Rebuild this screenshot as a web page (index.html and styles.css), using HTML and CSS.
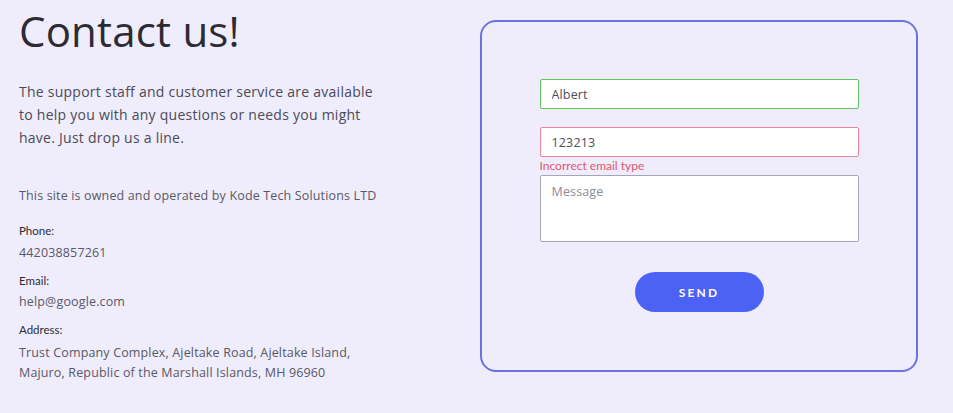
FILE: index.html
```html
<!DOCTYPE html>
<html>
<head>
<meta charset="utf-8">
<link rel="stylesheet" href="styles.css">
</head>
<body>
<div class="page">
  <section class="info">
    <h1 class="title">Contact us!</h1>
    <p class="lead">The support staff and customer service are available to help you with any questions or needs you might have. Just drop us a line.</p>
    <p class="owner">This site is owned and operated by Kode Tech Solutions LTD</p>
    <div class="item">
      <div class="label">Phone:</div>
      <div class="value">442038857261</div>
    </div>
    <div class="item">
      <div class="label">Email:</div>
      <div class="value">help@google.com</div>
    </div>
    <div class="item">
      <div class="label">Address:</div>
      <div class="value address">Trust Company Complex, Ajeltake Road, Ajeltake Island, Majuro, Republic of the Marshall Islands, MH 96960</div>
    </div>
  </section>
  <form class="card">
    <input class="field ok" type="text" value="Albert">
    <input class="field bad" type="text" value="123213">
    <div class="error">Incorrect email type</div>
    <textarea class="field message" placeholder="Message"></textarea>
    <button class="send" type="button">SEND</button>
  </form>
</div>
</body>
</html>
```
FILE: styles.css
```css
* { box-sizing: border-box; }
html, body { margin: 0; padding: 0; }
body {
  background: #efedfc;
  font-family: "Open Sans", "Noto Sans", sans-serif;
  color: #2c2b33;
  width: 953px;
  height: 413px;
  overflow: hidden;
}
.page {
  display: flex;
  align-items: flex-start;
  padding: 0 0 0 19px;
}
.info {
  width: 400px;
}
.title {
  margin: 5px 0 0 0;
  font-weight: 400;
  font-size: 42px;
  line-height: 52px;
  letter-spacing: 0.2px;
  color: #2c2b33;
}
.lead {
  margin: 23px 0 0 0;
  width: 362px;
  font-size: 14px;
  line-height: 23px;
  letter-spacing: 0.25px;
  color: #4b4a57;
}
.owner {
  margin: 37px 0 0 0;
  font-size: 12.5px;
  line-height: 20px;
  letter-spacing: 0.15px;
  color: #595866;
}
.item { margin-top: 17px; }
.item + .item { margin-top: 10px; }
.label {
  font-family: "Lato", sans-serif;
  font-size: 11.5px;
  line-height: 16px;
  color: #2c2b33;
}
.value {
  margin-top: 3.5px;
  font-size: 12.5px;
  line-height: 20px;
  letter-spacing: 0.15px;
  color: #595866;
}
.address { width: 345px; margin-top: 5px; }
.card {
  margin: 20px 0 0 61px;
  width: 438px;
  height: 352px;
  border: 2px solid #6b73df;
  border-radius: 16px;
  display: flex;
  flex-direction: column;
  align-items: center;
  padding-top: 57px;
}
.field {
  display: block;
  width: 319px;
  height: 30px;
  border: 1px solid #a7a5b8;
  border-radius: 2px;
  background: #ffffff;
  padding: 0 11px;
  font-family: "Open Sans", "Noto Sans", sans-serif;
  font-size: 12.5px;
  letter-spacing: 0.15px;
  color: #4e4d59;
  outline: none;
}
.ok { border-color: #5cc25e; }
.bad { border-color: #e98596; margin-top: 18px; }
.error {
  width: 319px;
  font-family: "Lato", sans-serif;
  font-size: 12px;
  line-height: 18px;
  color: #e0566c;
}
.message {
  height: 67px;
  padding: 7px 11px;
  resize: none;
}
.message::placeholder { color: #8d8c98; }
.send {
  margin-top: 30px;
  width: 129px;
  height: 40px;
  border: none;
  border-radius: 20px;
  background: #4c62f5;
  color: #ffffff;
  font-family: "Lato", sans-serif;
  font-weight: 700;
  font-size: 12px;
  letter-spacing: 2.2px;
}
```
